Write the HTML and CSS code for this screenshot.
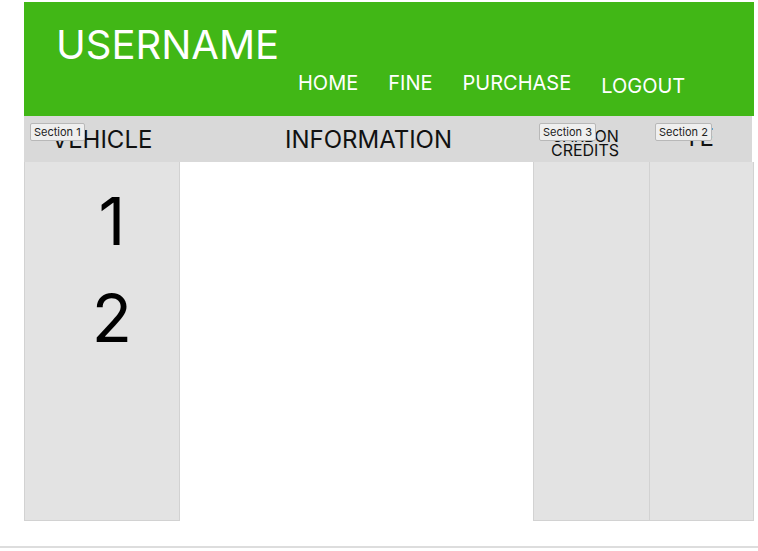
FILE: index.html
```html
<!DOCTYPE html>
<html lang="en">
<head>
<meta charset="utf-8">
<title>Dashboard</title>
<link rel="stylesheet" href="styles.css">
</head>
<body>
<div class="page">
  <header class="topbar">
    <h1 class="username">USERNAME</h1>
    <nav class="nav">
      <a class="nav-link" href="#">HOME</a>
      <a class="nav-link" href="#">FINE</a>
      <a class="nav-link" href="#">PURCHASE</a>
      <a class="nav-link nav-logout" href="#">LOGOUT</a>
    </nav>
  </header>

  <div class="headings">
    <div class="heading heading-vehicle"><span class="tag">Section 1</span>VEHICLE</div>
    <div class="heading heading-info">INFORMATION</div>
    <div class="heading heading-carbon"><span class="tag">Section 3</span>CARBON<br>CREDITS</div>
    <div class="heading heading-date"><span class="tag">Section 2</span>TE</div>
  </div>

  <div class="columns">
    <section class="col col-vehicle">
      <div class="num">1</div>
      <div class="num">2</div>
    </section>
    <section class="col col-info"></section>
    <section class="col col-carbon"></section>
    <section class="col col-date"></section>
  </div>
</div>
<footer class="footer-line"></footer>
</body>
</html>
```

FILE: styles.css
```css
* {
  box-sizing: border-box;
}

html, body {
  margin: 0;
  padding: 0;
  background: #ffffff;
}

body {
  font-family: Inter, "Liberation Sans", Arial, sans-serif;
  color: #111111;
}

.page {
  width: 730px;
  margin: 2px 0 0 24px;
}

/* green top bar */
.topbar {
  height: 114px;
  background: #41b716;
  padding: 20px 0 0 32px;
}

.username {
  margin: 0;
  font-size: 40px;
  font-weight: 400;
  line-height: 46px;
  color: #ffffff;
}

.nav {
  display: flex;
  align-items: flex-start;
  gap: 30px;
  margin: 3px 0 0 242px;
}

.nav-link {
  color: #ffffff;
  text-decoration: none;
  font-size: 20px;
  line-height: 24px;
}

.nav-logout {
  margin-top: 3px;
}

/* column headings */
.headings {
  display: grid;
  grid-template-columns: 156px 353px 116px 103px;
  width: 728px;
  height: 46px;
  background: #d9d9d9;
}

.heading {
  position: relative;
  text-align: center;
  font-size: 24px;
  line-height: 46px;
  padding-top: 1px;
  white-space: nowrap;
}

.heading-info {
  padding-left: 24px;
}

.heading-carbon {
  font-size: 16px;
  line-height: 14px;
  padding: 13px 12px 0 0;
}

.heading-date {
  padding: 0 3px 0 0;
  line-height: 44px;
}

.tag {
  position: absolute;
  left: 6px;
  top: 7px;
  z-index: 1;
  font-size: 11px;
  line-height: 15px;
  padding: 1px 3px 0;
  color: #222222;
  background: #efefef;
  border: 1px solid #b8b8b8;
  border-radius: 2px;
}

/* body columns */
.columns {
  display: grid;
  grid-template-columns: 156px 353px 116px 105px;
  height: 359px;
}

.col {
  background: #e3e3e3;
  border: 1px solid #d2d2d2;
  border-top: none;
}

.col-info {
  background: #ffffff;
  border: none;
}

.col-carbon {
  border-right: none;
}

.col-vehicle {
  padding: 11px 0 0 20px;
  text-align: center;
}

.num {
  font-size: 66px;
  line-height: 97px;
  color: #000000;
}

.footer-line {
  margin-top: 25px;
  height: 2px;
  background: #dddddd;
}
```
